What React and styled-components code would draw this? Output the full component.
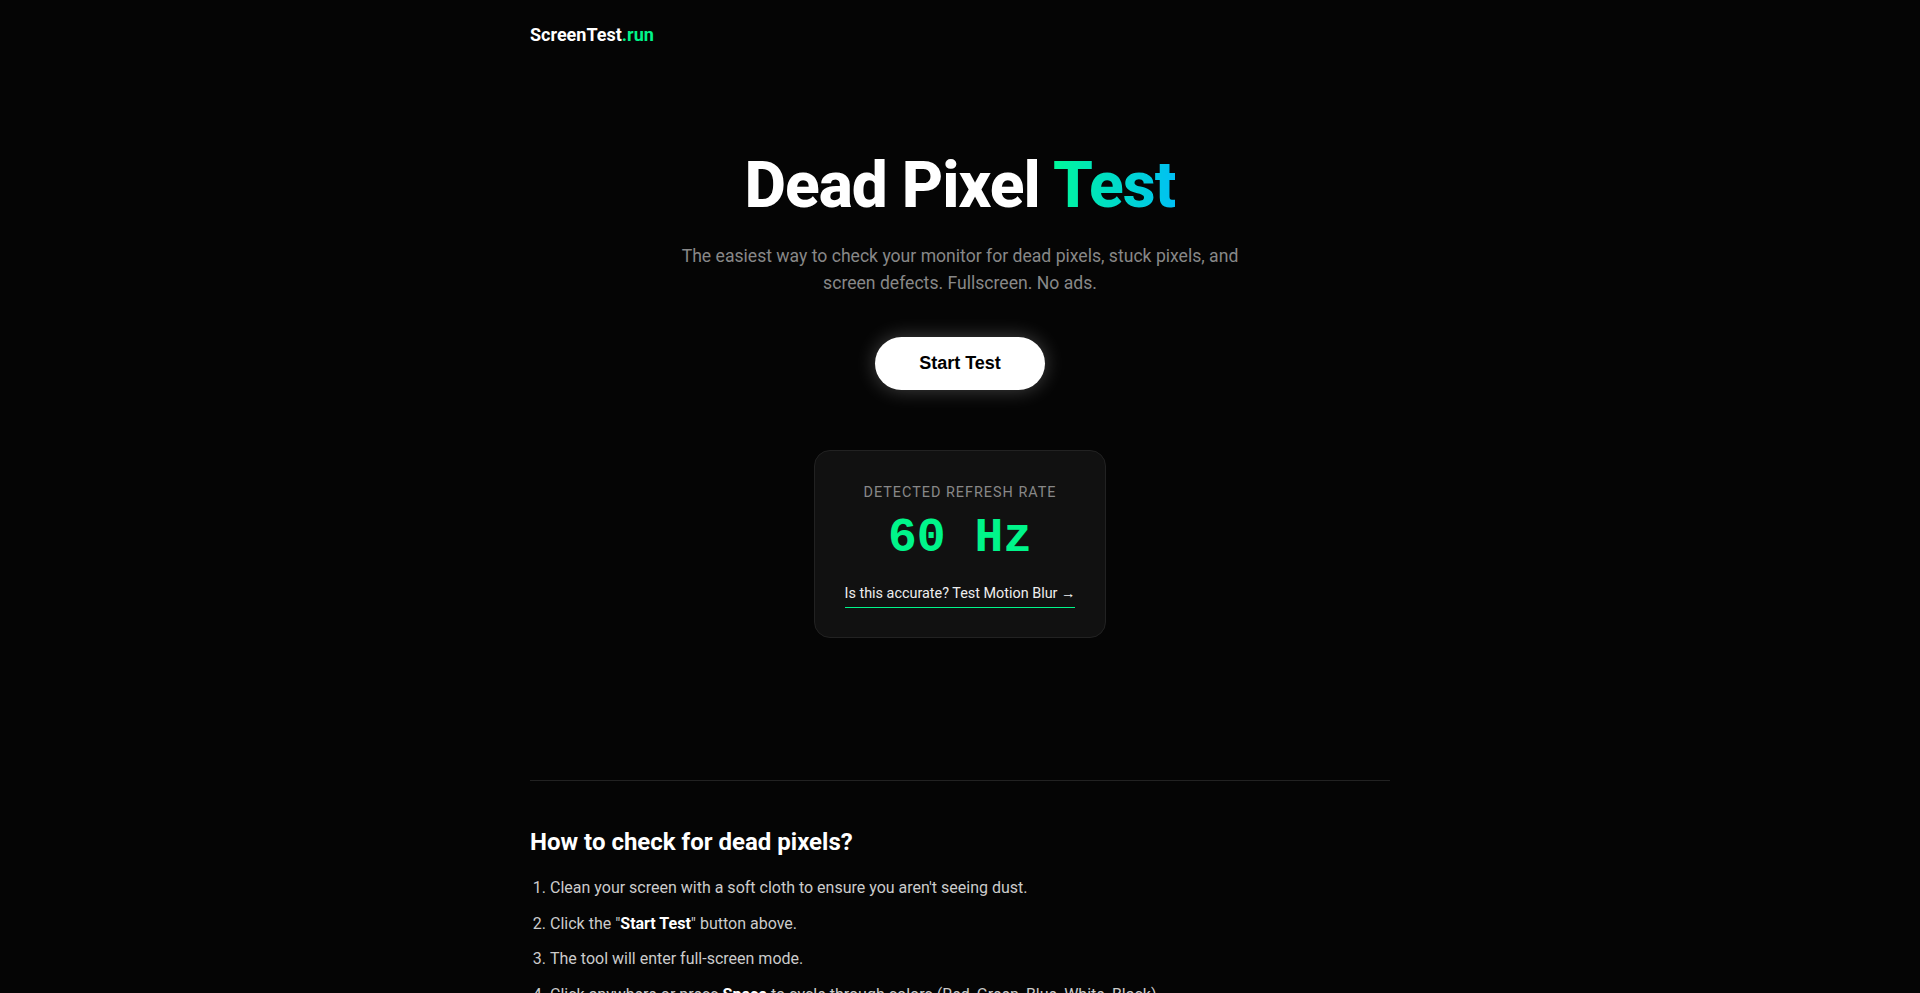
import React from 'react';
import styled, { createGlobalStyle } from 'styled-components';

const GlobalStyle = createGlobalStyle`
  html, body {
    margin: 0;
    padding: 0;
    background: #050505;
    color: #fff;
    font-family: Roboto, "Liberation Sans", Arial, sans-serif;
  }
`;

const Page = styled.div`
  min-height: 100vh;
  background: #050505;
`;

const Container = styled.div`
  max-width: 860px;
  margin: 0 auto;
`;

const Header = styled.header`
  padding: 24px 0;
`;

const Logo = styled.div`
  font-size: 18px;
  font-weight: 700;
  color: #fff;

  span {
    color: #00f58a;
  }
`;

const Hero = styled.section`
  display: flex;
  flex-direction: column;
  align-items: center;
  text-align: center;
  padding: 82px 0 142px;
`;

const Title = styled.h1`
  margin: 0;
  font-size: 64px;
  font-weight: 800;
  line-height: 1.1;
  letter-spacing: -1px;
`;

const Gradient = styled.span`
  background: linear-gradient(90deg, #00f89a, #00c0f4);
  -webkit-background-clip: text;
  background-clip: text;
  color: transparent;
`;

const Subtitle = styled.p`
  margin: 22px 0 0;
  max-width: 600px;
  font-size: 17.6px;
  line-height: 1.5;
  color: #888;
`;

const StartButton = styled.button`
  margin-top: 41px;
  padding: 16px 44px;
  border: none;
  border-radius: 50px;
  background: #fff;
  color: #000;
  font-family: "Liberation Sans", Arial, sans-serif;
  font-size: 18px;
  font-weight: 700;
  cursor: pointer;
  box-shadow: 0 0 20px rgba(255, 255, 255, 0.25);
`;

const Card = styled.div`
  margin-top: 60px;
  padding: 33px 30px 29px;
  background: #111;
  border: 1px solid #222;
  border-radius: 16px;
  display: flex;
  flex-direction: column;
  align-items: center;
`;

const CardLabel = styled.div`
  font-size: 14.4px;
  letter-spacing: 1px;
  text-transform: uppercase;
  color: #888;
`;

const Rate = styled.div`
  margin-top: 10px;
  font-family: "Liberation Mono", "Courier New", monospace;
  font-size: 48px;
  font-weight: 700;
  color: #00f58a;
`;

const CardLink = styled.a`
  margin-top: 20px;
  padding-bottom: 5px;
  font-size: 14.4px;
  color: #eee;
  text-decoration: none;
  border-bottom: 1px solid #00f58a;
`;

const Divider = styled.hr`
  margin: 0;
  border: none;
  border-top: 1px solid #222;
`;

const Info = styled.section`
  padding: 47px 0 40px;
`;

const InfoTitle = styled.h2`
  margin: 0 0 19px;
  font-size: 24px;
  font-weight: 700;
  color: #fff;
`;

const Steps = styled.ol`
  margin: 0;
  padding-left: 20px;
  color: #ccc;
  font-size: 16px;
  line-height: 1.6;

  li {
    margin-bottom: 10px;
  }

  b {
    color: #fff;
  }
`;

const steps = [
  <>Clean your screen with a soft cloth to ensure you aren't seeing dust.</>,
  <>Click the "<b>Start Test</b>" button above.</>,
  <>The tool will enter full-screen mode.</>,
  <>Click anywhere or press <b>Space</b> to cycle through colors (Red, Green, Blue, White, Black).</>,
];

export default function App() {
  return (
    <Page>
      <GlobalStyle />
      <Container>
        <Header>
          <Logo>ScreenTest<span>.run</span></Logo>
        </Header>

        <Hero>
          <Title>Dead Pixel <Gradient>Test</Gradient></Title>
          <Subtitle>
            The easiest way to check your monitor for dead pixels, stuck pixels, and screen defects. Fullscreen. No ads.
          </Subtitle>
          <StartButton>Start Test</StartButton>
          <Card>
            <CardLabel>Detected Refresh Rate</CardLabel>
            <Rate>60 Hz</Rate>
            <CardLink href="#">Is this accurate? Test Motion Blur →</CardLink>
          </Card>
        </Hero>

        <Divider />

        <Info>
          <InfoTitle>How to check for dead pixels?</InfoTitle>
          <Steps>
            {steps.map((s, i) => <li key={i}>{s}</li>)}
          </Steps>
        </Info>
      </Container>
    </Page>
  );
}
